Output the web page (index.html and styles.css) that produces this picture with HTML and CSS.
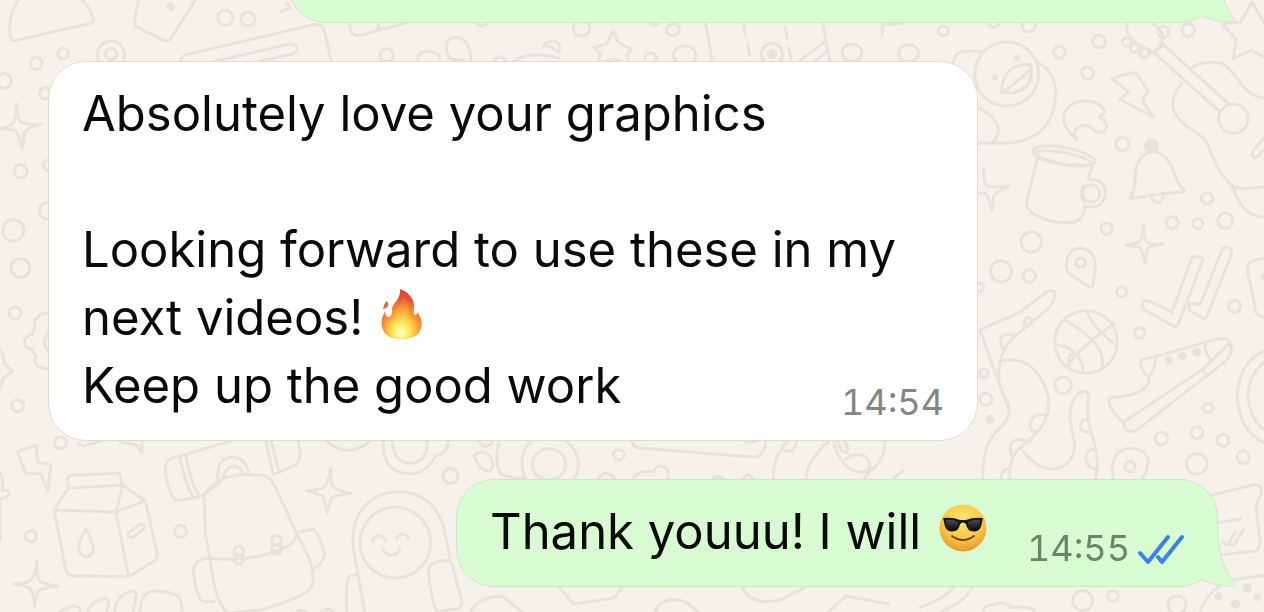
FILE: index.html
```html
<!DOCTYPE html>
<html lang="en">
  <head>
    <meta charset="UTF-8" />
    <meta name="viewport" content="width=device-width, initial-scale=1.0" />
    <title>Chat</title>
    <link rel="stylesheet" href="styles.css">
  </head>

  <body>
    <!-- doodle wallpaper -->
    <svg class="wallpaper" viewBox="0 0 1264 612" preserveAspectRatio="xMidYMid slice" aria-hidden="true">
      <!-- top left -->
      <g transform="scale(.3333)">
        <path d="M30 108Q24 40 56 0M245 0Q272 24 281 58Q282 66 272 70L46 122Q32 122 30 108" />
        <path d="M415 0L403 66Q402 76 412 82L492 122Q506 126 514 114L586 0" />
        <circle class="dot" cx="512" cy="20" r="9" />
        <circle cx="676" cy="53" r="23" /><circle cx="744" cy="57" r="21" />
        <circle cx="189" cy="161" r="16" /><circle cx="109" cy="190" r="18" />
        <circle cx="333" cy="164" r="41" /><circle cx="333" cy="162" r="17" />
        <path d="M540 184Q546 168 560 164L940 74Q966 72 972 88L994 184M645 184L866 133Q890 128 892 146Q890 158 876 162L768 186" />
        <path d="M845 34L872 24L862 10M1050 70Q1048 100 1066 106Q1080 110 1130 92L1215 70M1134 70Q1140 84 1130 92" />
        <circle cx="1160" cy="166" r="20" />
      </g>
      <!-- strip between the first bubbles -->
      <g transform="translate(400 0) scale(.3827 .3333)">
        <circle cx="214" cy="62" r="16" /><circle cx="474" cy="86" r="22" /><circle cx="713" cy="90" r="17" />
        <circle cx="1181" cy="158" r="26" /><circle cx="1329" cy="160" r="26" /><circle cx="1420" cy="93" r="14" />
        <circle cx="744" cy="166" r="29" /><circle cx="655" cy="174" r="15" /><circle cx="665" cy="64" r="12" />
        <path d="M128 172Q106 112 150 112Q184 118 186 186M128 172Q144 186 166 180M46 186Q44 154 76 154Q98 156 104 172" />
        <path d="M245 184Q252 166 268 172L278 184M296 184Q340 150 414 174M374 138Q390 120 412 126Q420 140 416 156Q402 150 394 140Z" />
        <path d="M558 92L570 126L604 148L592 166L600 194L560 176L518 190L524 160L506 142L540 132Z" />
        <path d="M798 70L816 184M1104 70L1124 184M1042 184L1112 124M1084 184L1118 150" />
        <path d="M898 72L902 104M908 132L914 166M1006 82L1012 114M1016 144L1022 176M1260 104V76L1312 70" />
        <ellipse cx="972" cy="162" rx="28" ry="32" /><ellipse class="dot" cx="972" cy="162" rx="10" ry="11" />
        <path d="M1446 186Q1450 154 1480 154H1520" />
      </g>
      <!-- top right: duck, guitar, cup, bell -->
      <g transform="translate(970 0) scale(.3333)">
        <circle cx="110" cy="222" r="96" />
        <path d="M202 186Q262 220 256 288Q250 420 110 430H20M24 322Q98 360 82 406Q76 420 68 428" />
        <path d="M94 278Q96 190 182 194Q192 270 132 278ZM94 278Q128 260 182 208M132 278Q170 262 186 238" />
        <circle class="dot" cx="142" cy="174" r="5" /><circle class="dot" cx="76" cy="232" r="5" />
        <circle cx="176" cy="76" r="20" /><circle cx="72" cy="66" r="16" />
        <circle cx="387" cy="125" r="19" /><circle cx="268" cy="157" r="18" /><circle cx="353" cy="219" r="18" />
        <circle cx="655" cy="90" r="19" /><circle cx="457" cy="432" r="20" />
        <path d="M426 236L484 218L500 222L536 274L520 292L522 310L552 352L450 298L474 274Z" />
        <path d="M320 420Q274 378 282 346Q292 304 348 302Q394 306 404 334Q400 348 386 350Q412 362 410 384Q400 402 376 394Q346 362 318 388Q310 400 320 420Z" />
        <path d="M470 70Q466 104 494 126L552 158L574 132L578 104Q570 80 548 72" />
        <circle cx="580" cy="96" r="17" /><circle cx="470" cy="126" r="13" /><circle cx="494" cy="144" r="13" /><circle cx="524" cy="160" r="14" />
        <path d="M552 158L750 336M580 134L772 308M552 158L580 134" />
        <circle cx="790" cy="356" r="44" />
        <path d="M668 202Q702 180 758 190C800 212 812 284 882 294M636 250Q602 286 610 326C626 378 680 390 710 424C728 474 746 520 790 562Q836 570 882 560M790 562Q812 646 882 652" />
        <path d="M882 414L850 452Q842 470 858 474L882 450" />
        <path d="M846 6L812 66L756 72L798 118L790 176L844 150L882 172M846 6L882 68" />
        <ellipse cx="282" cy="468" rx="94" ry="25" transform="rotate(11 282 468)" /><ellipse cx="282" cy="475" rx="84" ry="17" transform="rotate(11 282 475)" />
        <path d="M190 462Q230 500 368 494" />
        <path d="M202 476L170 606Q170 632 198 646Q250 674 314 666Q344 656 344 616M366 498L354 538M354 538Q408 536 406 584Q396 632 344 618" />
        <circle cx="364" cy="581" r="26" />
        <path d="M340 558Q326 580 342 606" />
        <path d="M528 462Q496 480 496 528Q496 568 480 596Q560 582 646 574Q620 552 610 510Q590 460 546 452ZM544 596Q566 622 580 592" />
        <circle class="dot" cx="544" cy="438" r="18" />
        <path d="M40 506Q42 550 52 560Q82 562 118 558Q78 574 70 590Q70 614 66 632Q56 588 46 580H24" />
        <circle cx="711" cy="595" r="17" /><circle cx="607" cy="668" r="18" /><circle cx="683" cy="671" r="15" /><circle cx="766" cy="662" r="23" /><circle cx="410" cy="686" r="17" />
      </g>
      <!-- right: pin, ticks, ball, shoe, octopus -->
      <g transform="translate(970 220) scale(.3333)">
        <circle cx="184" cy="66" r="31" /><circle cx="93" cy="154" r="32" /><circle cx="178" cy="168" r="19" /><circle cx="28" cy="202" r="13" />
        <circle cx="455" cy="215" r="15" /><circle cx="509" cy="339" r="16" /><circle cx="794" cy="259" r="18" /><circle cx="279" cy="496" r="25" />
        <path d="M290 146Q284 90 332 84Q378 90 376 142L370 192Q368 206 354 198L302 164Q292 156 290 146Z" /><circle cx="332" cy="128" r="14" />
        <path d="M520 16Q522 58 532 68Q548 74 580 72Q540 78 532 86Q528 104 526 128Q516 92 510 82Q490 76 468 76Q504 70 512 62Q520 38 520 16Z" />
        <path d="M520 244Q512 262 524 270L614 320Q624 318 626 308L698 122Q696 106 672 110Q664 114 662 124L606 276L538 244Q526 240 520 244Z" />
        <path d="M660 248Q652 268 666 276L700 296Q708 294 712 286L786 98Q782 78 758 84L752 98L690 254Z" />
        <path d="M882 114L846 124Q830 130 832 148L858 276Q864 290 882 290" /><circle class="dot" cx="882" cy="170" r="7" />
        <circle cx="348" cy="366" r="94" />
        <path d="M284 300Q410 372 396 438M260 374Q338 386 340 458M350 274Q372 330 440 376M294 438Q320 390 434 310M300 438Q288 404 312 402" />
        <path d="M30 330L148 278L230 216Q250 206 256 220Q256 240 232 268L130 352Q92 390 88 440Q78 500 112 542Q130 590 88 626Q36 670 38 776M30 330Q60 420 94 506L118 574" />
        <path d="M96 420C170 412 216 450 236 536C242 616 184 656 140 692Q114 734 120 776M160 694Q204 752 258 746Q312 734 314 674C304 618 292 584 306 552Q322 510 348 514Q362 524 354 544C344 632 394 664 378 776" />
        <path d="M232 584Q184 578 180 616Q184 640 202 638M128 714Q106 660 150 658L184 664M352 598Q328 600 332 624Q340 638 358 636M378 688Q346 688 348 718Q352 744 380 748M98 386Q80 344 116 342L134 346M166 318Q156 298 174 292L190 302M94 776Q94 746 118 748" />
        <circle cx="42" cy="460" r="13" /><circle cx="48" cy="538" r="18" /><circle class="dot" cx="60" cy="598" r="9" />
        <path d="M512 420L556 410L744 356Q782 350 784 386Q784 412 754 434L500 630Q478 642 464 624C466 598 412 580 418 534C468 530 540 520 536 472Q508 450 512 420Z" />
        <path d="M556 410Q556 450 536 472M464 604L698 448L776 372M698 448L712 470M706 372Q702 396 722 418" />
        <circle class="dot" cx="596" cy="419" r="8" /><circle class="dot" cx="638" cy="407" r="8" /><circle class="dot" cx="680" cy="396" r="9" />
        <path d="M882 392Q802 434 802 532Q808 632 882 668M882 428Q834 466 834 532Q840 596 882 630" />
        <circle cx="714" cy="564" r="15" /><circle cx="574" cy="656" r="19" /><circle cx="681" cy="638" r="18" /><circle cx="759" cy="661" r="18" /><circle cx="820" cy="712" r="19" /><circle cx="680" cy="732" r="31" />
        <path d="M430 776Q416 690 480 684Q546 692 532 740Q530 758 516 776" /><circle cx="480" cy="740" r="15" />
      </g>
      <!-- left edge -->
      <g transform="translate(0 50) scale(.3333)">
        <circle cx="12" cy="92" r="22" /><circle cx="136" cy="130" r="17" /><circle cx="62" cy="364" r="20" /><circle cx="40" cy="541" r="32" /><circle cx="144" cy="482" r="26" /><circle cx="146" cy="346" r="16" />
        <path d="M50 162Q50 206 64 218Q94 226 122 224Q82 234 74 246Q72 268 66 296Q58 258 46 242Q24 236 0 236Q34 228 42 216Q50 192 50 162Z" />
        <circle cx="61" cy="654" r="28" /><circle cx="45" cy="789" r="18" /><circle cx="53" cy="1067" r="18" />
        <path d="M144 790Q120 788 114 802L104 810V836L98 852Q74 856 74 880Q76 896 98 900L108 920Q98 944 120 952L144 958M144 850Q122 876 144 902M0 900L10 912L12 940L38 964L10 984L0 1016" />
      </g>
      <!-- bottom left: carton, backpack -->
      <g transform="translate(0 430) scale(.3333)">
        <circle cx="182" cy="38" r="18" /><circle cx="93" cy="319" r="17" /><circle cx="542" cy="304" r="18" />
        <path d="M52 64L108 46L112 96L152 104L144 184L122 132L78 130Q62 92 52 64ZM236 40L250 48L304 34M360 36L410 44L426 72V34" />
        <path d="M0 126Q12 150 6 180Q30 178 26 194Q16 208 0 206M0 206V330" />
        <path d="M206 174L202 150Q202 138 214 136L358 130L368 166L206 174L162 240L198 422Q202 436 218 438L386 440L348 246L162 240M348 246L368 166L436 212L472 372Q474 384 464 392L386 440M348 246L436 212" />
        <path d="M258 298Q234 336 236 358Q242 380 260 380Q280 376 280 354Q276 330 258 298ZM386 308L422 282Q434 280 436 292L398 322Q380 326 386 308Z" />
        <path d="M110 394Q108 440 122 456Q144 466 174 468Q132 474 116 482Q106 500 104 530Q100 492 92 476Q72 464 42 462Q82 460 94 448Q108 430 110 394Z" />
        <path d="M176 546L218 528Q240 526 240 546M264 546Q270 516 318 504Q334 510 318 546M344 546Q348 490 404 482Q416 484 398 546M420 546Q422 490 454 484Q500 480 532 498Q548 516 546 546" />
        <path d="M890 100Q908 86 894 34M690 34L514 86Q494 96 496 124Q500 176 524 208Q538 216 604 198L660 158M540 80Q554 160 580 202M558 76Q572 160 598 196M798 34L820 134M814 34L838 128M820 134L890 104" />
        <path d="M654 150Q646 80 702 82Q742 88 746 134M672 140Q680 106 706 108Q728 116 726 134" />
        <path d="M612 198L616 310L630 386Q650 556 700 548L780 540Q920 500 936 470Q948 430 920 370L888 306L830 180Q812 140 790 136L720 134Q640 142 612 198ZM626 384Q760 400 860 350Q888 338 890 308M626 384Q586 386 580 420Q586 490 604 510Q620 520 642 514" />
        <path d="M890 308L938 298Q958 308 974 372Q974 396 942 416" />
        <circle cx="716" cy="364" r="15" /><circle cx="716" cy="388" r="15" /><circle cx="830" cy="332" r="15" /><circle cx="830" cy="358" r="15" />
      </g>
      <!-- bottom: camera, astronaut -->
      <g transform="translate(230 430) scale(.3333)">
        <path d="M302 116Q302 156 310 172Q334 186 362 190Q318 196 304 204Q298 222 292 250Q286 218 280 200Q260 188 230 182Q272 180 284 170Q296 148 302 116Z" />
        <path d="M292 34Q350 88 420 34M460 34Q454 130 544 132Q592 126 618 76Q652 72 654 34M488 34Q490 98 542 100Q592 96 592 34" />
        <circle cx="662" cy="137" r="23" /><circle cx="496" cy="338" r="106" />
        <path d="M404 546L370 354Q358 224 472 188Q598 170 640 286L660 384M378 434L356 440Q346 470 350 546M604 404Q652 380 666 402L696 512Q698 530 682 536L622 544Q608 534 596 434Q594 410 604 404Z" />
        <path d="M428 332Q444 304 466 330M500 326Q516 298 536 326M458 358Q484 394 510 358M196 546Q216 536 230 546M276 546Q294 530 310 546" />
      </g>
      <!-- strip above the last bubble -->
      <g transform="translate(440 425) scale(.3571 .3333)">
        <circle cx="30" cy="154" r="21" /><circle cx="501" cy="89" r="15" />
        <path d="M96 90Q118 72 142 94Q154 130 138 138Q108 136 96 90ZM108 48Q126 80 150 48M166 48Q150 110 170 148L210 160L240 156M238 160Q214 88 256 48M354 48Q408 100 376 160" />
        <circle cx="305" cy="118" r="47" />
        <path d="M536 48Q540 70 566 70L876 96Q908 98 912 48M850 48Q866 58 886 48M540 160Q556 134 596 140Q616 108 638 136V160M444 160Q464 130 488 160M766 160Q778 148 792 160M850 160Q862 140 876 160" />
        <path d="M976 48Q932 90 934 160M1090 48Q1026 108 1026 160M1102 48Q1122 138 1180 142L1214 132Q1248 96 1246 48M1134 104Q1160 80 1190 94Q1212 112 1198 144M1114 48Q1124 88 1140 82Q1146 62 1130 48M1298 136L1270 160M1210 130L1188 160M960 76Q994 88 998 48" />
      </g>
      <!-- bottom right -->
      <g transform="translate(920 480) scale(.3333)">
        <path d="M872 46L1004 14Q1028 14 1024 40L1008 74L1020 184Q1022 206 1004 214L906 224M894 128L964 116M908 186L922 196L946 156M928 190L942 196L970 150M914 304L1032 286" />
        <circle cx="488" cy="362" r="30" /><circle cx="579" cy="348" r="16" /><circle cx="771" cy="374" r="27" />
        <path d="M840 396Q858 344 900 318M190 396Q188 376 220 374Q254 360 272 382Q304 376 344 388V396M0 382Q64 362 100 324M60 396Q130 370 156 324" />
        <circle class="dot" cx="896" cy="350" r="8" /><circle class="dot" cx="946" cy="372" r="9" /><circle class="dot" cx="982" cy="324" r="10" /><circle class="dot" cx="1012" cy="352" r="7" />
      </g>
      <path d="M470 612Q480 596 502 596L522 612M560 588L574 604L614 598L622 588M654 612Q664 594 686 602L698 612M742 588Q752 606 780 600L804 588M828 612L846 596L888 604" />
    </svg>

    <main class="chat">
      <div class="bubble sent wide">
        <svg class="tail" viewBox="0 0 40 58" aria-hidden="true">
          <path class="tail-fill" d="M0 0H20C20 25 27 41 38 56Q19 57 4 50L0 44Z" />
          <path class="tail-line" d="M20 0C20 25 27 41 38 56Q19 57 4 50" />
        </svg>
      </div>

      <div class="bubble received wide">
        <p>Absolutely love your graphics</p>
        <br />
        <p>
          Looking forward to use these in my<br />
          next videos!
          <svg class="emoji fire" viewBox="0 0 42 52" role="img" aria-label="fire">
            <defs>
              <radialGradient id="flame" cx=".5" cy=".9" r=".85">
                <stop offset="0" stop-color="#fff27a" />
                <stop offset=".3" stop-color="#ffd24a" />
                <stop offset=".58" stop-color="#f98f35" />
                <stop offset=".85" stop-color="#e9502c" />
                <stop offset="1" stop-color="#d94a32" />
              </radialGradient>
              <radialGradient id="core" cx=".5" cy=".88" r=".8">
                <stop offset="0" stop-color="#fffdd0" />
                <stop offset=".3" stop-color="#ffee60" />
                <stop offset=".6" stop-color="#ffb83c" />
                <stop offset="1" stop-color="#f0693a" />
              </radialGradient>
            </defs>
            <path fill="url(#flame)" d="M19 1C28 4 34 12 33 20C32 26 34 28 35 27C36 26 36 25 36 24C41 30 42 37 39 43C36 49 29 51 21 51C12 51 5 49 2 42C-1 35 1 29 4 23C4 27 6 29 8 29C11 28 11 25 11 21C11 15 20 12 19 1Z" />
            <path fill="url(#core)" d="M21 9C28 14 29 19 28 26C28 31 31 34 35 31C37 39 34 49 21 50C9 50 3 43 5 34C9 36 14 33 14 27C13 20 22 17 21 9Z" />
            <path fill="#e76545" d="M6 13Q3 15 2 21Q5 21 7 18Q8 16 6 13Z" />
          </svg>
        </p>
        <div class="last-line">
          <p>Keep up the good work</p>
          <time datetime="14:54">14:54</time>
        </div>
      </div>

      <div class="bubble sent">
        <div class="last-line">
          <p>
            Thank youuu! I will
            <svg class="emoji cool" viewBox="0 0 48 48" role="img" aria-label="smiling face with sunglasses">
              <defs>
                <radialGradient id="face" cx=".5" cy=".3" r=".7">
                  <stop offset="0" stop-color="#ffe36a" />
                  <stop offset=".6" stop-color="#fbc945" />
                  <stop offset="1" stop-color="#e8982c" />
                </radialGradient>
                <linearGradient id="lens" x2="0" y2="1">
                  <stop offset="0" stop-color="#4a4a4a" />
                  <stop offset="1" stop-color="#0c0c0c" />
                </linearGradient>
              </defs>
              <circle cx="24" cy="24" r="23.5" fill="url(#face)" />
              <path fill="#161616" d="M4 14Q14 13 21 16H27Q34 13 44 14L43 18Q42 27 36 27.5Q28 28 27 20Q24 17 21 20Q20 28 12 27.5Q6 27 5 18Z" />
              <path fill="url(#lens)" d="M7 16Q14 15 19 18Q19 26 12 26Q7 25 7 16ZM41 16Q34 15 29 18Q29 26 36 26Q41 25 41 16Z" />
              <path fill="none" stroke="#70401a" stroke-width="2" stroke-linecap="round" d="M13 32Q24 40 35 32" />
            </svg>
          </p>
          <div class="status">
            <time datetime="14:55">14:55</time>
            <svg class="ticks" viewBox="0 0 46 32" role="img" aria-label="Read">
              <path d="M2 19L10 28L30 3M20 23L24 28L44 3" />
            </svg>
          </div>
        </div>
        <svg class="tail" viewBox="0 0 40 58" aria-hidden="true">
          <path class="tail-fill" d="M0 0H20C20 25 27 41 38 56Q19 57 4 50L0 44Z" />
          <path class="tail-line" d="M20 0C20 25 27 41 38 56Q19 57 4 50" />
        </svg>
      </div>
    </main>
  </body>
</html>
```
FILE: styles.css
```css
* {
  box-sizing: border-box;
}
html,
body {
  padding: 0;
  margin: 0;
}
body {
  background: #f4f2eb;
  color: #0a0a0a;
  font-family: Inter, "Liberation Sans", sans-serif;
  font-size: 49px;
  line-height: 68px;
  overflow: hidden;
}
p {
  margin: 0;
}

/* wallpaper */
.wallpaper {
  position: fixed;
  inset: 0;
  width: 100%;
  height: 100%;
  z-index: -1;
  fill: none;
  stroke: #e7e3d9;
  stroke-width: 3px;
  stroke-linejoin: round;
  stroke-linecap: round;
}
.wallpaper * {
  vector-effect: non-scaling-stroke;
}
.wallpaper .dot {
  fill: #e7e3d9;
}

/* newest message stays at the bottom */
.chat {
  display: flex;
  flex-direction: column;
  justify-content: flex-end;
  gap: 38px;
  height: 100vh;
  padding: 0 46px 25px 48px;
}
.bubble {
  position: relative;
  flex-shrink: 0;
  min-height: 108px;
  padding: 18px 33px 20px;
  border: 1px solid #dfdcd2;
  border-radius: 38px;
}
.wide {
  width: calc(100% - 240px);
}
.received {
  align-self: flex-start;
  background: #fff;
}
.sent {
  align-self: flex-end;
  background: #d9fbd2;
  border-color: #d3e2c8;
}

.last-line {
  display: flex;
  justify-content: space-between;
  gap: 40px;
}
.status {
  display: flex;
  gap: 8px;
}
time {
  align-self: flex-end;
  color: #858585;
  font-size: 36px;
  line-height: 36px;
  font-variant-numeric: tabular-nums;
}
.sent time {
  color: #6f8369;
}
.ticks {
  align-self: flex-end;
  width: 46px;
  height: 32px;
  fill: none;
  stroke: #3b82e8;
  stroke-width: 4px;
  stroke-linecap: round;
  stroke-linejoin: round;
}

.emoji {
  display: inline-block;
  margin-left: 4px;
}
.fire {
  width: 42px;
  height: 52px;
  vertical-align: -5px;
}
.cool {
  width: 48px;
  height: 48px;
  vertical-align: -3px;
}

/* tail hangs off the bottom right corner */
.tail {
  position: absolute;
  right: -21px;
  bottom: -2px;
  width: 40px;
  height: 58px;
}
.tail-fill {
  fill: #d9fbd2;
}
.tail-line {
  fill: none;
  stroke: #d3e2c8;
}
```
